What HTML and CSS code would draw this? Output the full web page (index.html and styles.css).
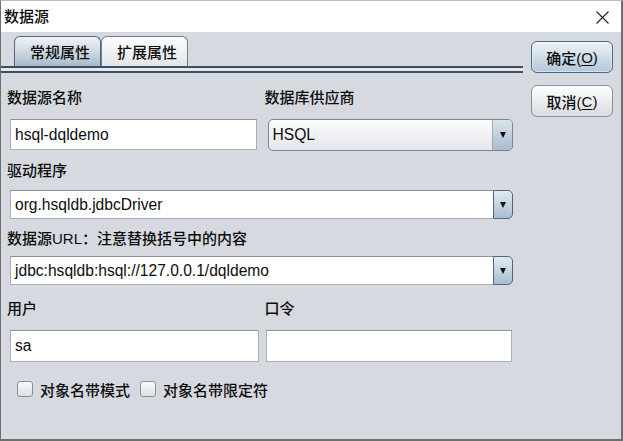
FILE: index.html
```html
<!DOCTYPE html>
<html lang="zh-CN">
<head>
<meta charset="utf-8">
<title>数据源</title>
<link rel="stylesheet" href="styles.css">
</head>
<body>
<div class="window">
  <div class="titlebar">
    <span class="title">数据源</span>
    <svg class="close" viewBox="0 0 13 13" width="13" height="13"><path d="M0.5 0.5 L12.5 12.5 M12.5 0.5 L0.5 12.5" stroke="#222" stroke-width="1.1" fill="none"/></svg>
  </div>
  <div class="body">
    <div class="main">
      <div class="tabs">
        <div class="tab selected">常规属性</div>
        <div class="tab">扩展属性</div>
      </div>
      <div class="tabline"></div>
      <div class="form">
        <div class="grid2">
          <div class="col">
            <span class="lbl">数据源名称</span>
            <div class="field f1">hsql-dqldemo</div>
          </div>
          <div class="col">
            <span class="lbl c2">数据库供应商</span>
            <div class="combo"><span class="txt">HSQL</span><span class="arrow"><span class="tri"></span></span></div>
          </div>
        </div>
        <span class="lbl l2">驱动程序</span>
        <div class="ecombo e1"><div class="field">org.hsqldb.jdbcDriver</div><span class="ebtn"><span class="tri"></span></span></div>
        <span class="lbl l3">数据源URL：注意替换括号中的内容</span>
        <div class="ecombo e2"><div class="field">jdbc:hsqldb:hsql://127.0.0.1/dqldemo</div><span class="ebtn"><span class="tri"></span></span></div>
        <div class="grid2 r4">
          <div class="col">
            <span class="lbl">用户</span>
            <div class="field f4">sa</div>
          </div>
          <div class="col">
            <span class="lbl c2">口令</span>
            <div class="field f4 pw"></div>
          </div>
        </div>
        <div class="checks">
          <span class="cb"></span><span class="cblabel">对象名带模式</span>
          <span class="cb"></span><span class="cblabel">对象名带限定符</span>
        </div>
      </div>
    </div>
    <div class="buttons">
      <div class="button ok">确定(<span class="u">O</span>)</div>
      <div class="button cancel">取消(<span class="u">C</span>)</div>
    </div>
  </div>
</div>
</body>
</html>
```

FILE: styles.css
```css
* { box-sizing: border-box; }
html, body { margin: 0; padding: 0; }
body {
  width: 623px;
  height: 441px;
  overflow: hidden;
  font-family: "Liberation Sans", "Noto Sans CJK SC", sans-serif;
  font-weight: 500;
  color: #0d0d0d;
}
.window {
  width: 623px;
  height: 441px;
  background: #d6d9df;
  border: 1px solid #6c6f74;
  border-top-color: #bdbdbd;
  border-right-width: 2px;
  border-bottom-width: 2px;
  display: flex;
  flex-direction: column;
}
.titlebar {
  flex: none;
  height: 31px;
  background: #fff;
  display: flex;
  align-items: center;
  justify-content: space-between;
  padding: 0 12px 0 3px;
}
.title { font-size: 15px; line-height: 20px; }
.close { display: block; margin-top: 2px; }
.body { display: flex; flex: 1; }
.main { width: 522px; flex: none; }
.tabs {
  display: flex;
  padding-left: 13px;
  margin-top: 4px;
  height: 30px;
}
.tab {
  width: 87px;
  height: 30px;
  border: 1px solid #737d8b;
  border-bottom: none;
  border-radius: 6px 6px 0 0;
  font-size: 15px;
  display: flex;
  align-items: center;
  justify-content: center;
  padding-left: 5px;
  background: linear-gradient(#fdfdfe, #e2e5e9);
}
.tab.selected {
  background: linear-gradient(#eef2f6 0%, #cbd7e1 55%, #a6b9ca 100%);
  border-color: #53657a;
}
.tabline {
  height: 7px;
  border-top: 2px solid #3f4d60;
  border-bottom: 2px solid #3f4d60;
  background: #e4e7ec;
}
.form { padding: 15px 10px 0 9px; }
.lbl {
  display: block;
  height: 20px;
  line-height: 20px;
  font-size: 15px;
  margin-left: -3px;
  white-space: nowrap;
}
.lbl.c2 { margin-left: 0; }
.grid2 {
  display: grid;
  grid-template-columns: 1fr 1fr;
  column-gap: 6px;
}
.field {
  background: #fff;
  border: 1px solid #a9adb4;
  border-top-color: #8c8f95;
  font-size: 15.6px;
  font-weight: 400;
  padding-left: 4px;
  display: flex;
  align-items: center;
  white-space: nowrap;
}
.f1 { height: 31px; margin-top: 11px; width: calc(100% - 2px); }
.combo {
  height: 32px;
  margin-top: 11px;
  margin-left: 3px;
  border: 1px solid #7b8592;
  border-radius: 5px;
  background: linear-gradient(#fdfdfd, #e3e6ea);
  display: flex;
  align-items: stretch;
  font-size: 15.6px;
  font-weight: 400;
}
.combo .txt { flex: 1; display: flex; align-items: center; padding-left: 4px; }
.combo .arrow {
  width: 20px;
  border-left: 1px solid #a0abb8;
  border-radius: 0 4px 4px 0;
  background: linear-gradient(#dbe4ec, #a7bcce);
  display: flex;
  align-items: center;
  justify-content: center;
}
.tri {
  width: 0;
  height: 0;
  border-left: 3.5px solid transparent;
  border-right: 3.5px solid transparent;
  border-top: 6px solid #111;
}
.l2 { margin-top: 10px; }
.l3 { margin-top: 10px; }
.ecombo { display: flex; height: 29px; }
.e1 { margin-top: 9px; }
.e2 { margin-top: 7px; }
.ecombo .field { flex: 1; border-right: none; }
.ebtn {
  width: 20px;
  border: 1px solid #56657a;
  border-radius: 0 5px 5px 0;
  background: linear-gradient(#e3eaf1, #a8bdd0);
  display: flex;
  align-items: center;
  justify-content: center;
}
.r4 { margin-top: 14px; }
.f4 { height: 32px; margin-top: 11px; }
.pw { margin-left: 1px; width: calc(100% - 2px); }
.checks {
  display: flex;
  align-items: center;
  margin-top: 17px;
  margin-left: 7px;
  height: 20px;
}
.cb {
  width: 16px;
  height: 16px;
  border: 1px solid #8a8f98;
  border-radius: 3px;
  background: linear-gradient(#fcfcfd, #dcdfe4);
  margin-right: 7px;
}
.cblabel { font-size: 15px; margin-right: 10px; white-space: nowrap; }
.buttons {
  margin-left: 8px;
  margin-top: 9px;
  display: flex;
  flex-direction: column;
  gap: 12px;
}
.button {
  width: 82px;
  height: 32px;
  border-radius: 6px;
  font-size: 15px;
  display: flex;
  align-items: center;
  justify-content: center;
  padding-top: 1px;
  white-space: nowrap;
}
.ok {
  border: 1px solid #4a6989;
  background: linear-gradient(#edf3f8, #c9d8e6 60%, #b4c8db);
  box-shadow: inset 0 0 0 1px rgba(255,255,255,0.45);
}
.cancel {
  border: 1px solid #8c9199;
  background: linear-gradient(#fefefe, #e8eaed 60%, #d9dce1);
}
.u { text-decoration: underline; text-underline-offset: 2px; }
```
